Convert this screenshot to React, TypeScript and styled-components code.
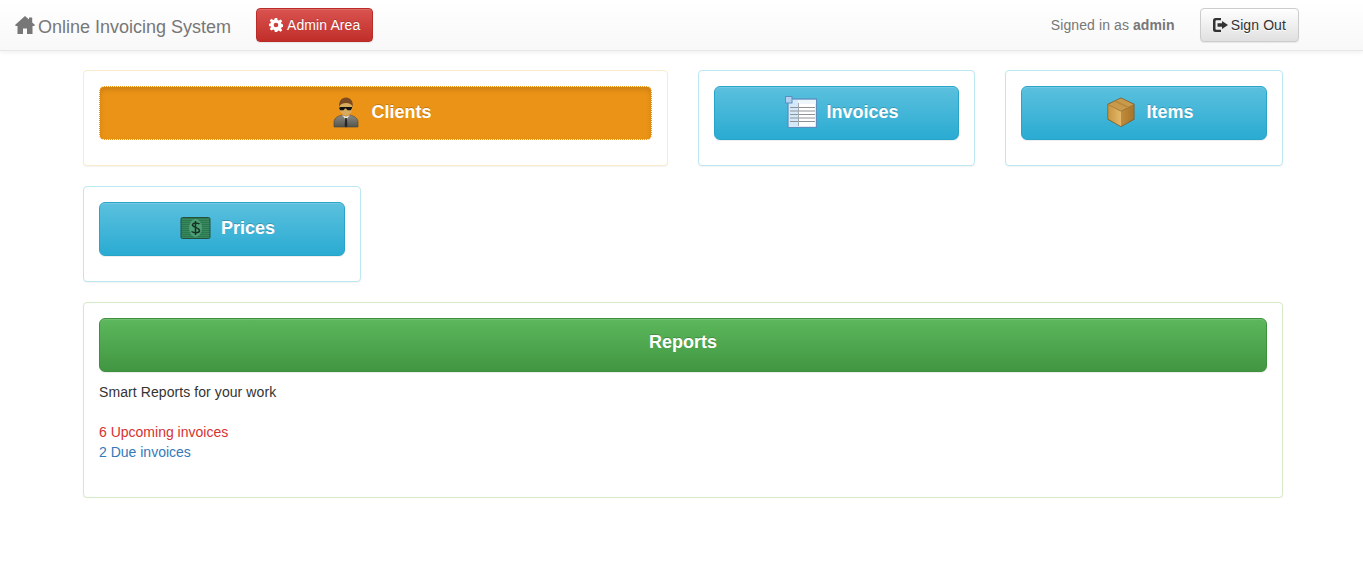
import React from 'react';
import styled, { createGlobalStyle, css } from 'styled-components';

const GlobalStyle = createGlobalStyle`
  * {
    box-sizing: border-box;
  }
  html, body {
    margin: 0;
    padding: 0;
    background: #fff;
    font-family: "Liberation Sans", Arial, sans-serif;
    font-size: 14px;
    line-height: 20px;
    color: #333;
  }
`;

const Navbar = styled.nav`
  display: flex;
  align-items: flex-start;
  height: 51px;
  padding: 0 64px 0 15px;
  background: linear-gradient(to bottom, #fff 0, #f8f8f8 100%);
  border-bottom: 1px solid #e7e7e7;
  box-shadow: inset 0 1px 0 rgba(255, 255, 255, 0.15), 0 1px 5px rgba(0, 0, 0, 0.075);
`;
const Brand = styled.a`
  display: flex;
  align-items: center;
  width: 241px;
  height: 50px;
  padding-top: 4px;
  font-size: 18px;
  color: #777;
  text-shadow: 0 1px 0 rgba(255, 255, 255, 0.25);
`;
const HomeIcon = styled.svg`
  width: 20px;
  height: 18px;
  margin: -4px 3px 0 0;
  fill: #777;
`;
const NavRight = styled.div`
  display: flex;
  margin-left: auto;
`;
const SignedIn = styled.p`
  margin: 15px 25px 0 0;
  color: #777;
  letter-spacing: 0.1px;
`;
const NavButton = styled.a<{ $variant: 'danger' | 'default' }>`
  display: flex;
  align-items: center;
  height: 34px;
  margin-top: 8px;
  padding: 0 12px;
  border: 1px solid;
  border-radius: 4px;
  letter-spacing: 0.1px;
  box-shadow: inset 0 1px 0 rgba(255, 255, 255, 0.15), 0 1px 1px rgba(0, 0, 0, 0.075);
  ${(p) =>
    p.$variant === 'danger'
      ? css`
          gap: 4px;
          color: #fff;
          background: linear-gradient(to bottom, #d9534f 0, #c12e2a 100%);
          border-color: #b92c28;
          text-shadow: 0 -1px 0 rgba(0, 0, 0, 0.2);
        `
      : css`
          gap: 3px;
          color: #333;
          background: linear-gradient(to bottom, #fff 0, #e0e0e0 100%);
          border-color: #ccc;
          text-shadow: 0 1px 0 #fff;
        `}
`;
const ButtonIcon = styled.svg<{ $width: number }>`
  width: ${(p) => p.$width}px;
  height: 14px;
  fill: currentColor;
  flex-shrink: 0;
`;

const Page = styled.main`
  display: flex;
  flex-direction: column;
  gap: 20px;
  width: 1200px;
  margin: 19px 0 0 83px;
`;
const Row = styled.div<{ $columns: string }>`
  display: grid;
  grid-template-columns: ${(p) => p.$columns};
  gap: 30px;
`;
const toneColors = {
  warning: '#faebcc',
  info: '#bce8f1',
  success: '#d6e9c6',
};
const Well = styled.section<{ $tone: keyof typeof toneColors }>`
  padding: 15px 15px 25px;
  background: #fff;
  border: 1px solid ${(p) => toneColors[p.$tone]};
  border-radius: 4px;
  box-shadow: 0 1px 1px rgba(0, 0, 0, 0.05);
`;
const BigButton = styled.a<{ $variant: 'focus' | 'info' | 'success' }>`
  display: flex;
  align-items: center;
  justify-content: center;
  gap: 9px;
  height: 54px;
  padding-bottom: 2px;
  border: 1px solid;
  border-radius: 6px;
  font-size: 18px;
  font-weight: 700;
  color: #fff;
  text-shadow: 0 -1px 0 rgba(0, 0, 0, 0.2);
  box-shadow: inset 0 1px 0 rgba(255, 255, 255, 0.15), 0 1px 1px rgba(0, 0, 0, 0.075);
  ${(p) =>
    p.$variant === 'info' &&
    css`
      background: linear-gradient(to bottom, #5bc0de 0, #2aabd2 100%);
      border-color: #28a4c9;
    `}
  ${(p) =>
    p.$variant === 'success' &&
    css`
      padding-bottom: 6px;
      background: linear-gradient(to bottom, #5cb85c 0, #419641 100%);
      border-color: #3e8f3e;
    `}
  ${(p) =>
    p.$variant === 'focus' &&
    css`
      border-color: transparent;
      background-color: #eb9316;
      background-origin: border-box;
      background-repeat: no-repeat;
      background-image:
        repeating-linear-gradient(90deg, #fff 0 1px, transparent 1px 2px),
        repeating-linear-gradient(90deg, #fff 0 1px, transparent 1px 2px),
        repeating-linear-gradient(0deg, #fff 0 1px, transparent 1px 2px),
        repeating-linear-gradient(0deg, #fff 0 1px, transparent 1px 2px);
      background-size: 100% 1px, 100% 1px, 1px 100%, 1px 100%;
      background-position: 0 0, 0 100%, 0 0, 100% 0;
      box-shadow: inset 0 3px 5px rgba(0, 0, 0, 0.125);
    `}
`;
const Icon = styled.svg`
  width: 32px;
  height: 32px;
  margin-left: 11px;
  flex-shrink: 0;
`;
const ReportText = styled.p`
  margin: 10px 0 20px;
  letter-spacing: 0.08px;
`;
const ReportLines = styled.div`
  margin-bottom: 10px;
`;
const ReportLine = styled.a<{ $color: string }>`
  display: block;
  color: ${(p) => p.$color};
`;

const AgentIcon = () => (
  <Icon viewBox="0 0 32 32">
    <defs>
      <linearGradient id="suit" x1="0" y1="0" x2="0" y2="1">
        <stop offset="0" stopColor="#8a8a82" />
        <stop offset="1" stopColor="#56564f" />
      </linearGradient>
    </defs>
    <path d="M4 31v-5c0-4 4-6 8-7l4 2 4-2c4 1 8 3 8 7v5z" fill="url(#suit)" stroke="#45453f" strokeWidth="0.6" />
    <path d="M12 19l4 5 4-5-4 1.500z" fill="#e6e2d8" />
    <path d="M15.200 22h1.600l.6 8-1.400 1.500-1.400-1.500z" fill="#26262a" />
    <ellipse cx="16" cy="11.500" rx="6.400" ry="8" fill="#d8aa5e" />
    <path d="M9.300 11c-.8-6 2.400-9.500 6.700-9.500s7.500 3.500 6.700 9.500c-1-3-3.500-4-6.700-4s-5.700 1-6.700 4z" fill="#7a4a22" />
    <path d="M9.800 11h12.400l-.4 1.600-1 1.600h-3.300l-1.500-1.600h-1l-1.500 1.600h-3.300l-1-1.600z" fill="#141414" />
  </Icon>
);

const InvoiceIcon = () => {
  const rows = [11, 14.5, 18, 21.5, 25];
  return (
    <Icon viewBox="0 0 32 32">
      <rect x="3" y="3" width="28.500" height="28.500" fill="#fff" stroke="#5b8fc0" strokeWidth="1.400" />
      <rect x="4" y="4" width="9" height="27" fill="#d4eafa" />
      <rect x="13" y="4" width="18" height="4" fill="#eef5fb" />
      {rows.map((y) => (
        <rect key={y} x="5" y={y} width="25" height="1" fill="#8f9396" />
      ))}
      <rect x="13" y="7" width="1" height="23" fill="#a0a8b0" />
      <rect x="0.500" y="0.500" width="6.500" height="6.500" fill="#b4d0f0" stroke="#5b8fc0" />
    </Icon>
  );
};

const BoxIcon = () => (
  <Icon viewBox="0 0 32 32">
    <defs>
      <linearGradient id="boxLeft" x1="0" y1="0" x2="1" y2="0">
        <stop offset="0" stopColor="#c8963f" />
        <stop offset="1" stopColor="#e4b86a" />
      </linearGradient>
      <linearGradient id="boxRight" x1="0" y1="0" x2="1" y2="0">
        <stop offset="0" stopColor="#c08c3c" />
        <stop offset="1" stopColor="#a87428" />
      </linearGradient>
    </defs>
    <path d="M16 1.500L29.500 8v15.500L16 31 2.500 23.500V8z" fill="#7c5a26" />
    <path d="M16 15.500L3.200 8.800v14.300L16 30.200z" fill="url(#boxLeft)" />
    <path d="M16 15.500l12.800-6.700v14.300L16 30.200z" fill="url(#boxRight)" />
    <path d="M16 2.300L28.800 8.500 16 15 3.200 8.500z" fill="#c99a4c" />
    <path d="M9 5.500l13 6.300 2-1L11 4.500z" fill="#b98a3e" />
  </Icon>
);

const MoneyIcon = () => (
  <Icon viewBox="0 0 32 32">
    <defs>
      <pattern id="bill" width="2" height="2" patternUnits="userSpaceOnUse">
        <rect width="2" height="1" fill="#2c7650" />
        <rect y="1" width="2" height="1" fill="#388a5e" />
      </pattern>
    </defs>
    <rect x="1" y="5.500" width="29" height="21" rx="1.500" fill="url(#bill)" stroke="#24503c" />
    <ellipse cx="15.500" cy="16" rx="6.500" ry="9" fill="#4fa076" />
    <path
      d="M19.500 12c-1-1-6-2-7 .5-1 2.800 7 2.800 7 6 0 3-6 2.500-8 1M15.500 9v14"
      fill="none"
      stroke="#143526"
      strokeWidth="1.500"
    />
  </Icon>
);

export default function App() {
  return (
    <>
      <GlobalStyle />
      <Navbar>
        <Brand>
          <HomeIcon viewBox="0 0 20 18">
            <path d="M10 0l4 3.500V1.500h3.200v5L20 9l-.8 1h-1.700v8H12v-5.500H8V18H2.500v-8H.8L0 9z" />
          </HomeIcon>
          Online Invoicing System
        </Brand>
        <NavButton $variant="danger">
          <ButtonIcon $width={14} viewBox="0 0 24 24">
            <path d="M10 0h4l.8 3.600 2 .8 3.100-2 2.800 2.800-2 3.100.8 2 3.500.7v4l-3.500.8-.8 2 2 3-2.800 2.800-3.100-2-2 .8L14 24h-4l-.8-3.600-2-.8-3.100 2-2.800-2.800 2-3-.8-2L-1 14v-4l3.500-.7.800-2-2-3.100 2.800-2.800 3.100 2 2-.8zM12 8a4 4 0 100 8 4 4 0 000-8z" />
          </ButtonIcon>
          Admin Area
        </NavButton>
        <NavRight>
          <SignedIn>
            Signed in as <b>admin</b>
          </SignedIn>
          <NavButton $variant="default">
            <ButtonIcon $width={15} viewBox="0 0 15 14">
              <path d="M2.500 0H8v2.300H3.500a1 1 0 00-1 1v7.400a1 1 0 001 1H8V14H2.500A2.500 2.500 0 010 11.500v-9A2.500 2.500 0 012.500 0zM9 3l6 4-6 4V8.700H4.500V5.300H9z" />
            </ButtonIcon>
            Sign Out
          </NavButton>
        </NavRight>
      </Navbar>
      <Page>
        <Row $columns="585px 277px 278px">
          <Well $tone="warning">
            <BigButton $variant="focus">
              <AgentIcon />
              Clients
            </BigButton>
          </Well>
          <Well $tone="info">
            <BigButton $variant="info">
              <InvoiceIcon />
              Invoices
            </BigButton>
          </Well>
          <Well $tone="info">
            <BigButton $variant="info">
              <BoxIcon />
              Items
            </BigButton>
          </Well>
        </Row>
        <Row $columns="278px">
          <Well $tone="info">
            <BigButton $variant="info">
              <MoneyIcon />
              Prices
            </BigButton>
          </Well>
        </Row>
        <Well $tone="success">
          <BigButton $variant="success">Reports</BigButton>
          <ReportText>Smart Reports for your work</ReportText>
          <ReportLines>
            <ReportLine $color="#d43232">6 Upcoming invoices</ReportLine>
            <ReportLine $color="#337ab7">2 Due invoices</ReportLine>
          </ReportLines>
        </Well>
      </Page>
    </>
  );
}
